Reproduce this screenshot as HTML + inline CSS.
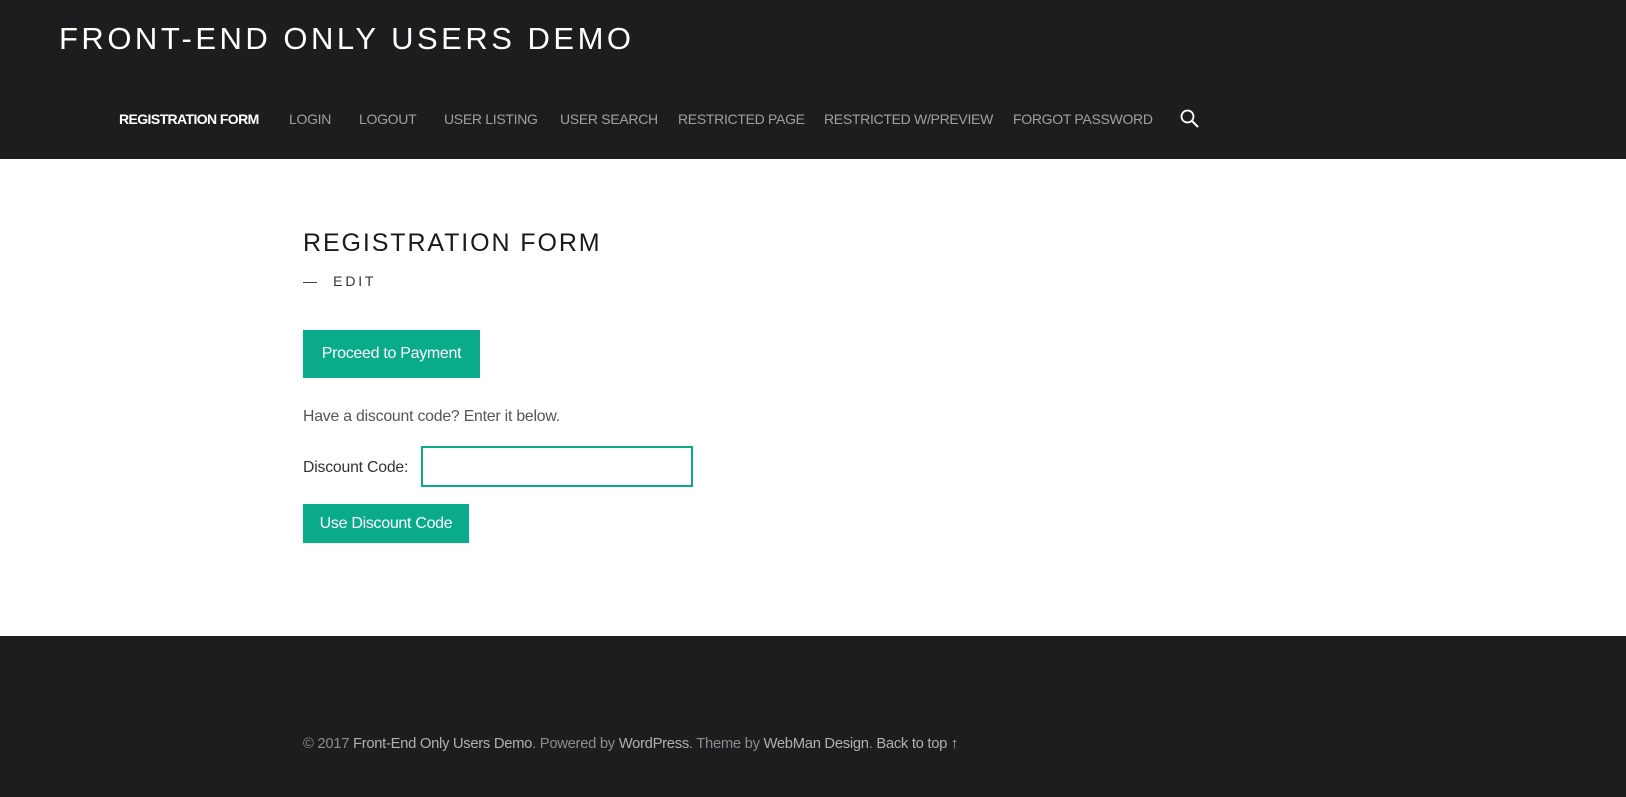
<!DOCTYPE html>
<html><head><meta charset="utf-8">
<style>
*{margin:0;padding:0;box-sizing:border-box}
body{width:1626px;height:797px;overflow:hidden;font-family:"Liberation Sans",sans-serif;background:#fff;position:relative}
.hdr{position:absolute;left:0;top:0;width:1626px;height:159px;background:#1c1d1f}
.title{position:absolute;left:59px;top:21px;font-size:31px;color:#fff;letter-spacing:3.5px;white-space:nowrap;line-height:36px}
.nav{position:absolute;top:110px;font-size:14px;color:#a0a0a0;white-space:nowrap;line-height:18px;letter-spacing:-0.3px}
.nav.act{color:#fff;font-weight:bold;letter-spacing:-0.6px}
h1{position:absolute;left:303px;top:228px;font-size:25px;font-weight:normal;color:#1a1a1a;letter-spacing:1.9px;line-height:30px;white-space:nowrap}
.edit{position:absolute;left:303px;top:273px;font-size:14px;color:#333;letter-spacing:2.8px;white-space:nowrap}
.btn{position:absolute;left:303px;background:#0aab8a;color:#fff;font-size:16px;display:flex;align-items:center;justify-content:center;letter-spacing:-0.3px}
.p{position:absolute;left:303px;font-size:15.8px;color:#555;white-space:nowrap;letter-spacing:-0.2px}
.inp{position:absolute;left:421px;top:446px;width:272px;height:41px;border:2px solid #0aab8a;background:#fff}
.ftr{position:absolute;left:0;top:636px;width:1626px;height:161px;background:#1c1d1f}
.ft{position:absolute;left:303px;top:736px;font-size:14.8px;color:#8c8c8c;white-space:nowrap;letter-spacing:-0.3px}
.ft b{color:#b0b0b0;font-weight:normal}
</style></head><body>
<div class="hdr">
<div class="title">FRONT-END ONLY USERS DEMO</div>
<div class="nav act" style="left:119px">REGISTRATION FORM</div>
<div class="nav" style="left:289px">LOGIN</div>
<div class="nav" style="left:359px">LOGOUT</div>
<div class="nav" style="left:444px">USER LISTING</div>
<div class="nav" style="left:560px">USER SEARCH</div>
<div class="nav" style="left:678px">RESTRICTED PAGE</div>
<div class="nav" style="left:824px">RESTRICTED W/PREVIEW</div>
<div class="nav" style="left:1013px">FORGOT PASSWORD</div>
<svg style="position:absolute;left:1179px;top:108px" width="22" height="22" viewBox="0 0 22 22"><circle cx="8.5" cy="8.5" r="6" fill="none" stroke="#fff" stroke-width="1.8"/><path d="M13 13 L19 19" stroke="#fff" stroke-width="2"/></svg>
</div>
<h1>REGISTRATION FORM</h1>
<div class="edit">— &nbsp;EDIT</div>
<div class="btn" style="top:330px;width:177px;height:48px">Proceed to Payment</div>
<div class="p" style="top:408px">Have a discount code? Enter it below.</div>
<div class="p" style="top:459px;color:#333">Discount Code:</div>
<div class="inp"></div>
<div class="btn" style="top:504px;width:166px;height:39px">Use Discount Code</div>
<div class="ftr"></div>
<div class="ft">© 2017 <b>Front-End Only Users Demo</b>. Powered by <b>WordPress</b>. Theme by <b>WebMan Design</b>. <b>Back to top ↑</b></div>
</body></html>
